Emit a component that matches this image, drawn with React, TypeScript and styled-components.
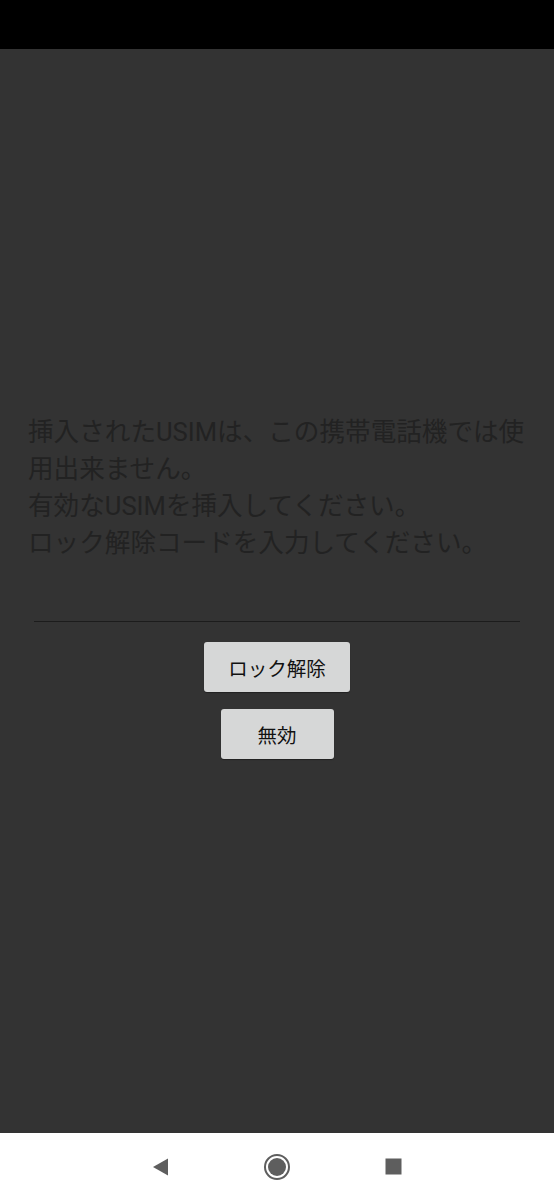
import React from 'react';
import styled, { createGlobalStyle } from 'styled-components';

const GlobalStyle = createGlobalStyle`
  html, body {
    margin: 0;
    padding: 0;
    background: #333333;
  }
  body {
    font-family: Roboto, "Noto Sans CJK JP", sans-serif;
  }
`;

const Screen = styled.div`
  width: 554px;
  height: 1200px;
  display: flex;
  flex-direction: column;
  overflow: hidden;
`;

const StatusBar = styled.div`
  height: 49px;
  background: #000;
  flex-shrink: 0;
`;

const Main = styled.main`
  flex: 1;
  background: #333333;
  display: flex;
  flex-direction: column;
  padding-top: 365px;
`;

const Message = styled.p`
  margin: 0 18px 0 28px;
  font-size: 25.6px;
  line-height: 37px;
  color: #222222;
  letter-spacing: 0;
`;

const Divider = styled.hr`
  margin: 59px 34px 0;
  border: none;
  border-top: 1px solid #1c1c1c;
  height: 0;
`;

const Actions = styled.div`
  display: flex;
  flex-direction: column;
  align-items: center;
  gap: 17px;
  margin-top: 20px;
`;

const Button = styled.button`
  min-width: 113px;
  height: 50px;
  padding: 0 24px;
  border: none;
  border-radius: 3px;
  background: #d6d7d7;
  color: #111;
  font-family: Roboto, "Noto Sans CJK JP", sans-serif;
  font-size: 19.5px;
  box-shadow: 0 1px 1px rgba(0, 0, 0, 0.35);
  cursor: pointer;
`;

const NavBar = styled.nav`
  height: 67px;
  background: #fff;
  display: flex;
  align-items: center;
  justify-content: center;
  flex-shrink: 0;
`;

const NavSlot = styled.div`
  width: 116px;
  display: flex;
  justify-content: center;
  align-items: center;
`;

export default function App() {
  return (
    <>
      <GlobalStyle />
      <Screen>
        <StatusBar />
        <Main>
          <Message>
            挿入されたUSIMは、この携帯電話機では使用出来ません。
            <br />
            有効なUSIMを挿入してください。
            <br />
            ロック解除コードを入力してください。
          </Message>
          <Divider />
          <Actions>
            <Button>ロック解除</Button>
            <Button>無効</Button>
          </Actions>
        </Main>
        <NavBar>
          <NavSlot>
            <svg width="18" height="18" viewBox="0 0 18 18">
              <path d="M16 0.5 L16 17.5 L1 9 Z" fill="#5e5e5e" />
            </svg>
          </NavSlot>
          <NavSlot>
            <svg width="28" height="28" viewBox="0 0 28 28">
              <circle cx="14" cy="14" r="12" fill="none" stroke="#5e5e5e" strokeWidth="2" />
              <circle cx="14" cy="14" r="9" fill="#5e5e5e" />
            </svg>
          </NavSlot>
          <NavSlot>
            <svg width="17" height="17" viewBox="0 0 17 17">
              <rect x="0.5" y="0.5" width="16" height="16" fill="#5e5e5e" />
            </svg>
          </NavSlot>
        </NavBar>
      </Screen>
    </>
  );
}
